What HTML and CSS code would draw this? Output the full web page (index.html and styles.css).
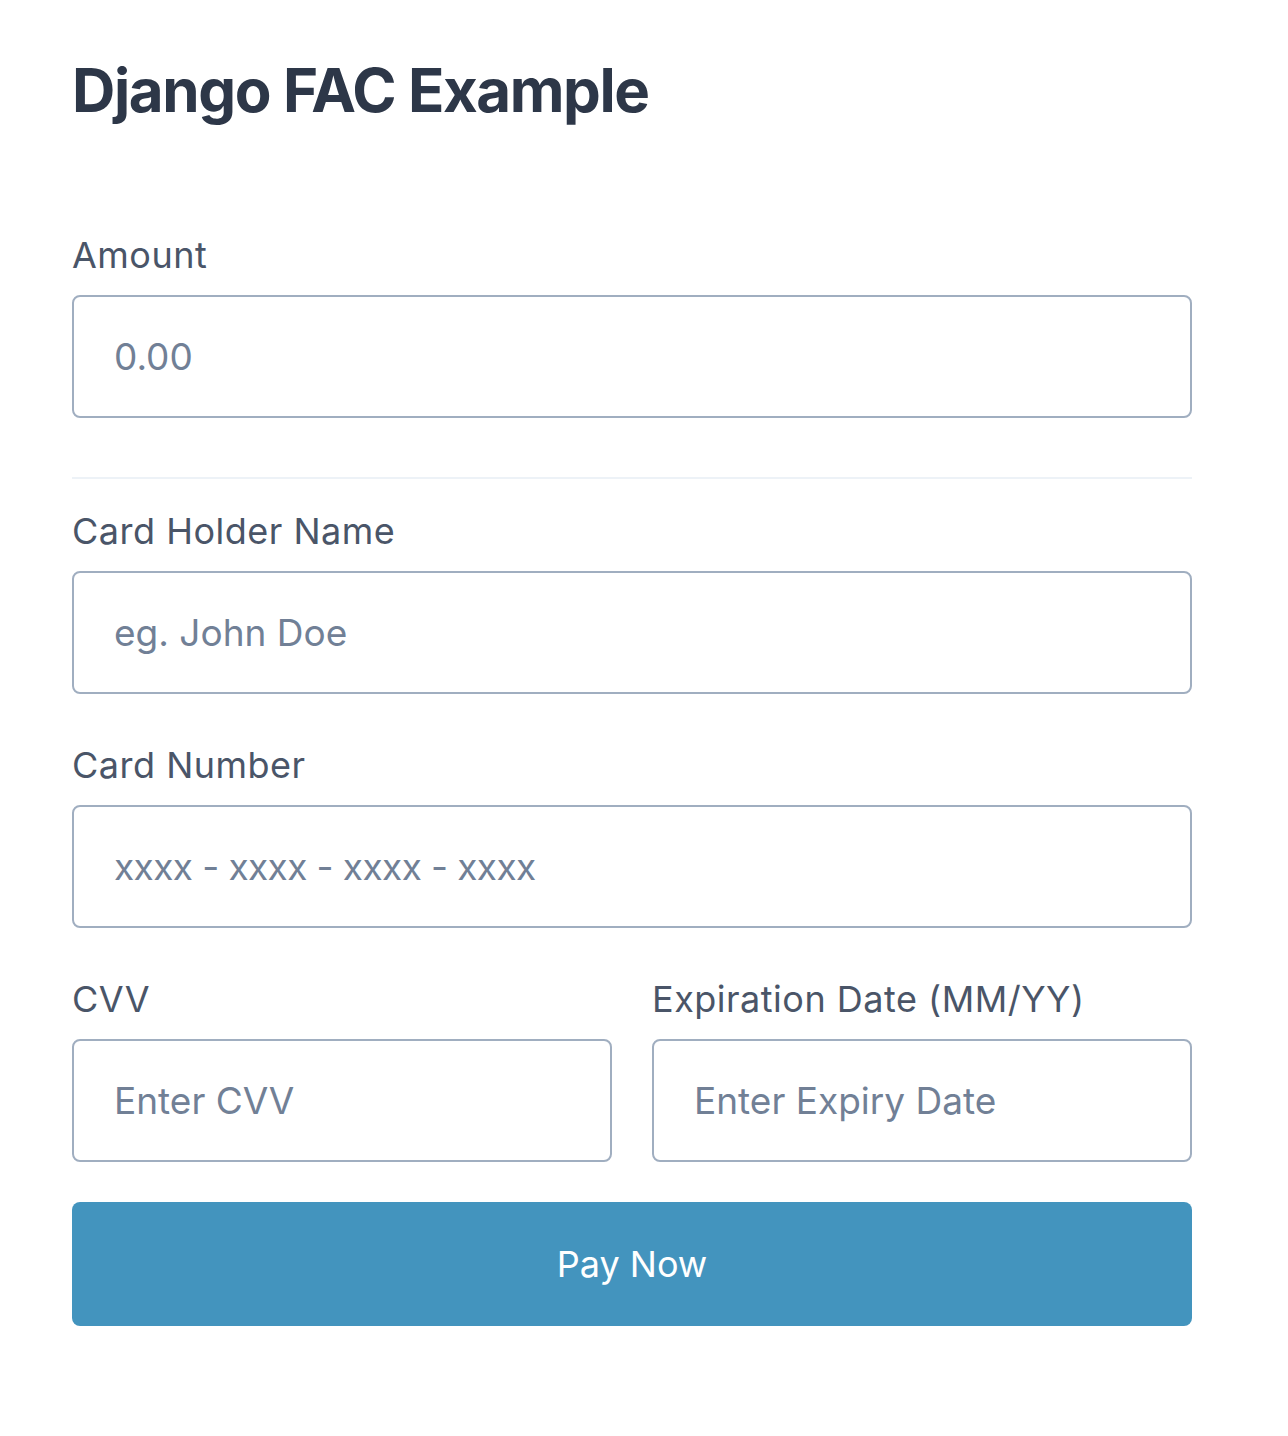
FILE: index.html
```html
<!DOCTYPE html>
<html lang="en">
<head>
<meta charset="utf-8">
<title>Django FAC Example</title>
<link rel="stylesheet" href="styles.css">
</head>
<body>
<main class="page">
  <h1 class="title">Django FAC Example</h1>
  <form class="form">
    <div class="field field-top">
      <label class="label" for="amount">Amount</label>
      <input class="input" id="amount" type="text" placeholder="0.00">
    </div>
    <hr class="divider">
    <div class="field field-first">
      <label class="label" for="name">Card Holder Name</label>
      <input class="input" id="name" type="text" placeholder="eg. John Doe">
    </div>
    <div class="field">
      <label class="label" for="number">Card Number</label>
      <input class="input input-number" id="number" type="text" placeholder="xxxx - xxxx - xxxx - xxxx">
    </div>
    <div class="row">
      <div class="field">
        <label class="label" for="cvv">CVV</label>
        <input class="input" id="cvv" type="text" placeholder="Enter CVV">
      </div>
      <div class="field">
        <label class="label" for="exp">Expiration Date (MM/YY)</label>
        <input class="input" id="exp" type="text" placeholder="Enter Expiry Date">
      </div>
    </div>
    <button class="btn" type="button">Pay Now</button>
  </form>
</main>
</body>
</html>
```

FILE: styles.css
```css
* { box-sizing: border-box; }
html, body { margin: 0; padding: 0; background: #fff; }
body { font-family: Inter, "Noto Sans", "Liberation Sans", sans-serif; }

.page {
  width: 1120px;
  margin-left: 72px;
  padding-top: 54px;
}

.title {
  margin: 0 0 101px;
  font-size: 60px;
  line-height: 72px;
  font-weight: 700;
  color: #2d3748;
  letter-spacing: -1.4px;
}

.form { display: flex; flex-direction: column; }

.field { display: flex; flex-direction: column; margin-bottom: 43px; }
.field-top { margin-bottom: 0; }
.field-first { margin-top: 24px; }

.label {
  font-size: 36px;
  line-height: 56px;
  color: #4a5568;
  margin-bottom: 12px;
  letter-spacing: 0.5px;
}

.input {
  height: 123px;
  width: 100%;
  border: 2px solid #a0aec0;
  border-radius: 8px;
  padding: 0 40px;
  font-family: inherit;
  font-size: 37px;
  color: #2d3748;
  background: #fff;
  outline: none;
}
.input::placeholder { color: #718096; opacity: 1; }
.input-number::placeholder { letter-spacing: -0.6px; }

.divider {
  border: 0;
  border-top: 2px solid #edf2f7;
  margin: 59px 0 0;
  height: 0;
}

.row {
  display: grid;
  grid-template-columns: 1fr 1fr;
  column-gap: 40px;
}
.row .field { margin-bottom: 40px; }

.btn {
  height: 124px;
  width: 100%;
  border: 0;
  border-radius: 8px;
  background: #4394be;
  color: #fff;
  font-family: inherit;
  font-size: 36px;
  cursor: pointer;
}
```
